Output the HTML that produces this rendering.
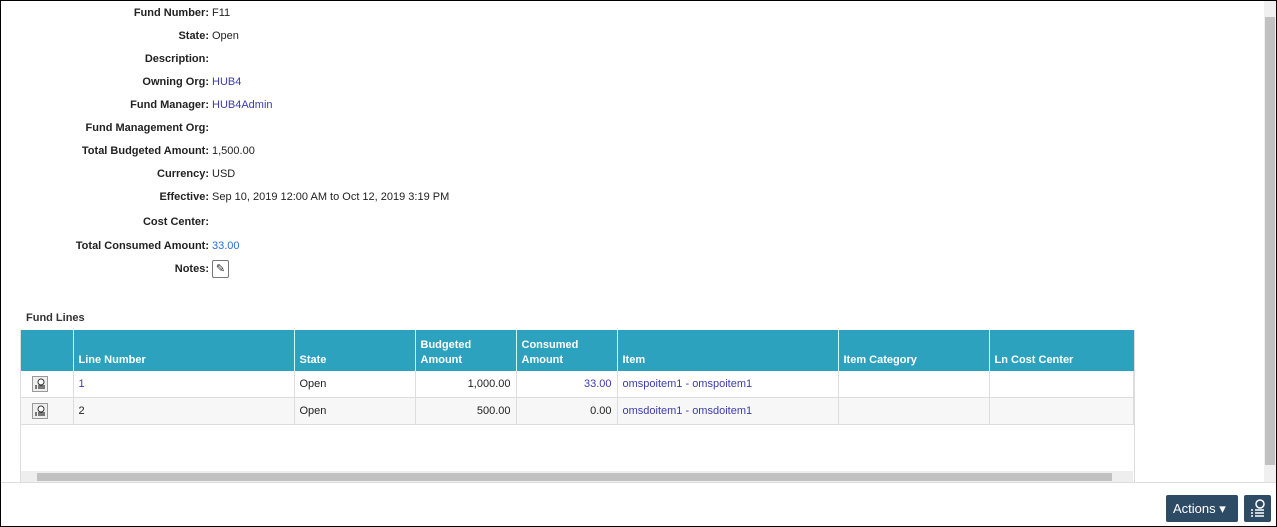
<!DOCTYPE html><html><head><style>
body{margin:0;width:1277px;height:527px;overflow:hidden;font-family:"Liberation Sans",sans-serif;font-size:11px;color:#222;background:#fff}
.frame{position:absolute;left:0;top:0;width:1275px;height:525px;border:1px solid #000}
.l{position:absolute;right:1068px;font-weight:bold;text-align:right;white-space:nowrap}
.v{position:absolute;left:212px;white-space:nowrap}
a{color:#3b3bb0;text-decoration:none}
table{position:absolute;left:20px;top:330px;border-collapse:collapse;width:1114px;font-size:11px}
th{background:#2ca2be;color:#fff;text-align:left;vertical-align:bottom;padding:0 5px 3px;height:38px;border-left:1px solid #cfe;font-weight:bold;line-height:15px}
th:first-child{border-left:none}
td{height:26px;border:1px solid #ddd;padding:0 5px;border-top:none}
tr.b td{background:#f7f7f7}
.r{text-align:right}
.ic{display:inline-block;margin-left:6px;vertical-align:middle}
</style></head><body><div class="frame"></div>
<div class="l" style="top:7px">Fund Number:</div><div class="v" style="top:7px">F11</div>
<div class="l" style="top:30px">State:</div><div class="v" style="top:30px">Open</div>
<div class="l" style="top:53px">Description:</div>
<div class="l" style="top:76px">Owning Org:</div><div class="v" style="top:76px"><a>HUB4</a></div>
<div class="l" style="top:99px">Fund Manager:</div><div class="v" style="top:99px"><a>HUB4Admin</a></div>
<div class="l" style="top:122px">Fund Management Org:</div>
<div class="l" style="top:145px">Total Budgeted Amount:</div><div class="v" style="top:145px">1,500.00</div>
<div class="l" style="top:168px">Currency:</div><div class="v" style="top:168px">USD</div>
<div class="l" style="top:191px">Effective:</div><div class="v" style="top:191px">Sep 10, 2019 12:00 AM to Oct 12, 2019 3:19 PM</div>
<div class="l" style="top:216px">Cost Center:</div>
<div class="l" style="top:240px">Total Consumed Amount:</div><div class="v" style="top:240px"><a style="color:#2a6fd6">33.00</a></div>
<div class="l" style="top:263px">Notes:</div><div style="position:absolute;left:212px;top:260px;width:15px;height:16px;border:1px solid #777;border-radius:2px;font-size:11px;text-align:center;line-height:16px">✎</div>
<div style="position:absolute;left:26px;top:312px;font-weight:bold;font-size:11px;color:#333">Fund Lines</div>
<table><tr><th style="width:42px"></th><th style="width:210px">Line Number</th><th style="width:110px">State</th><th style="width:90px">Budgeted<br>Amount</th><th style="width:90px">Consumed<br>Amount</th><th style="width:210px">Item</th><th style="width:140px">Item Category</th><th>Ln Cost Center</th></tr>
<tr><td><svg class="ic" width="16" height="16" viewBox="0 0 16 16"><rect x=".5" y=".5" width="15" height="15" fill="#eee" stroke="#999"/><circle cx="9" cy="6" r="3" fill="#fff" stroke="#333"/><path d="M3 10h2M6 10h7M3 12h2M6 12h7" stroke="#333" stroke-width="1.3"/></svg></td><td><a>1</a></td><td>Open</td><td class="r">1,000.00</td><td class="r"><a>33.00</a></td><td><a>omspoitem1 - omspoitem1</a></td><td></td><td></td></tr>
<tr class="b"><td><svg class="ic" width="16" height="16" viewBox="0 0 16 16"><rect x=".5" y=".5" width="15" height="15" fill="#eee" stroke="#999"/><circle cx="9" cy="6" r="3" fill="#fff" stroke="#333"/><path d="M3 10h2M6 10h7M3 12h2M6 12h7" stroke="#333" stroke-width="1.3"/></svg></td><td>2</td><td>Open</td><td class="r">500.00</td><td class="r">0.00</td><td><a>omsdoitem1 - omsdoitem1</a></td><td></td><td></td></tr></table>
<div style="position:absolute;left:20px;top:330px;width:1113px;height:152px;border-left:1px solid #ddd;border-right:1px solid #ddd"></div>
<div style="position:absolute;left:21px;top:471px;width:1112px;height:12px;background:#eee"><div style="position:absolute;left:16px;top:2px;width:1075px;height:8px;background:#c1c1c1"></div></div>
<div style="position:absolute;left:1264px;top:1px;width:12px;height:481px;background:#f0f0f0"><div style="position:absolute;left:1px;top:16px;width:10px;height:448px;background:#c1c1c1"></div></div>
<div style="position:absolute;left:1px;top:482px;width:1275px;height:1px;background:#ddd"></div>
<div style="position:absolute;left:1166px;top:495px;width:72px;height:27px;background:#2e4b66;color:#fff;border-radius:2px;font-size:13px;line-height:27px;padding-left:7px;box-sizing:border-box">Actions &#9662;</div>
<div style="position:absolute;left:1244px;top:495px;width:27px;height:27px;background:#2e4b66;border-radius:2px"><svg width="27" height="27" viewBox="0 0 27 27"><circle cx="16" cy="9" r="4" fill="none" stroke="#fff" stroke-width="1.5"/><path d="M7 15h2M11 15h9M7 18h2M11 18h9M7 21h2M11 21h9" stroke="#fff" stroke-width="1.6"/></svg></div>
</body></html>
